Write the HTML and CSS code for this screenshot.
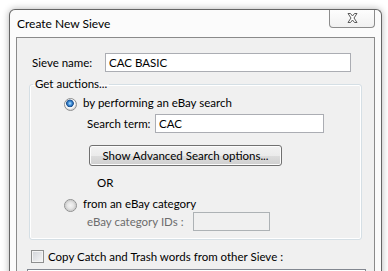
FILE: index.html
```html
<!DOCTYPE html>
<html lang="en">
<head>
    <meta charset="UTF-8">
    <title>Create New Sieve</title>
    <link rel="stylesheet" href="styles.css">
</head>
<body>
    <div class="window">
        <div class="titlebar">
            <span class="title">Create New Sieve</span>
            <button class="close" title="Close">
                <svg width="11" height="10" viewBox="0 0 11 10">
                    <path d="M1 .5h2.5L5.5 3 7.5.5H10L7 5l3 4.5H7.5L5.5 7 3.5 9.5H1L4 5z" fill="#fff" stroke="#5a5a5a" stroke-width="1" stroke-linejoin="round"/>
                </svg>
            </button>
        </div>
        <div class="client">
            <div class="name-row">
                <label class="name-label" for="sieve-name">Sieve name:</label>
                <input class="text name-input" id="sieve-name" type="text" value="CAC BASIC">
            </div>
            <fieldset class="group">
                <legend>Get auctions...</legend>
                <label class="option">
                    <input type="radio" name="source" checked>
                    <span>by performing an eBay search</span>
                </label>
                <div class="field-row search-row">
                    <span class="field-label">Search term:</span>
                    <input class="text search-input" type="text" value="CAC">
                </div>
                <button class="win-btn">Show Advanced Search options...</button>
                <div class="or">OR</div>
                <label class="option option-cat">
                    <input type="radio" name="source">
                    <span>from an eBay category</span>
                </label>
                <div class="field-row cat-row">
                    <span class="field-label disabled">eBay category IDs :</span>
                    <input class="text cat-input" type="text" disabled>
                </div>
            </fieldset>
            <label class="copy-row">
                <input type="checkbox">
                <span>Copy Catch and Trash words from other Sieve :</span>
            </label>
            <div class="list-box"></div>
        </div>
    </div>
</body>
</html>
```

FILE: styles.css
```css
html, body {
    margin: 0;
    height: 271px;
    overflow: hidden;
    background: #fff;
    font-family: 'Lato', 'Liberation Sans', sans-serif;
    font-size: 11.5px;
    color: #000;
}
.window {
    box-sizing: border-box;
    width: 373px;
    height: 300px;
    margin: 9px 0 0 9px;
    padding: 0 6px;
    border: 1px solid #666;
    border-bottom: none;
    border-radius: 6px 6px 0 0;
    background: #fbfbfb;
    box-shadow: 0 0 7px rgba(0, 0, 0, 0.3);
}
.titlebar {
    display: flex;
    justify-content: space-between;
    align-items: flex-start;
    height: 27px;
}
.title {
    padding: 6px 0 0 1px;
    font-size: 12px;
    line-height: 15px;
}
.close {
    box-sizing: border-box;
    display: flex;
    align-items: center;
    justify-content: center;
    width: 46px;
    height: 18px;
    padding: 0 0 1px;
    border: 1px solid #8c8c8c;
    border-top: none;
    border-radius: 0 0 4px 4px;
    background: linear-gradient(#fdfdfd, #f1f1f1);
}
.client {
    height: 260px;
    border: 1px solid #8a8a8a;
    background: #f0f0f0;
}
/* name row */
.name-row {
    display: flex;
    align-items: center;
    margin: 15px 0 0 15px;
}
.name-label {
    width: 73px;
}
.text {
    box-sizing: border-box;
    height: 19px;
    margin: 0;
    padding: 0 3px;
    border: 1px solid #abadb3;
    background: #fff;
    font: inherit;
    color: #000;
    outline: none;
}
.name-input {
    width: 246px;
}
/* group box */
.group {
    margin: 5px 12px 0;
    padding: 0 0 8px;
    border: 1px solid #d5dfe5;
    border-radius: 3px;
    box-shadow: inset 0 0 0 1px #fff;
}
.group legend {
    margin-left: 3px;
    padding: 0 2px;
    line-height: 14px;
}
.option {
    display: flex;
    align-items: flex-start;
    margin: 4px 0 0 34px;
    line-height: 15px;
}
.option input {
    appearance: none;
    width: 13px;
    height: 13px;
    margin: 3px 6px 0 0;
    border: 1px solid #8e8f8f;
    border-radius: 50%;
    background: radial-gradient(circle at 50% 50%, #f4f4f4 0, #e6e6e6 3px, #d0d0d0 5px, #fafafa 6px);
}
.option input:checked {
    background: radial-gradient(circle at 45% 40%, #b9e4ff 0, #3a8ad6 2px, #1b4f8e 3.5px, #fff 4.2px, #f4f4f4 5px, #d8d8d8 6px);
}
.option-cat {
    margin-top: 6px;
}
.field-row {
    display: flex;
    align-items: center;
    margin: 3px 0 0 57px;
}
.field-label {
    width: 68px;
}
.field-label.disabled {
    width: 106px;
    color: #6d6d6d;
}
.search-input {
    width: 169px;
}
.cat-row {
    margin-top: 0;
}
.cat-input {
    width: 77px;
    border-color: #adb2b5;
    background: #f0f0f0;
}
.win-btn {
    box-sizing: border-box;
    display: block;
    width: 193px;
    height: 21px;
    margin: 12px 0 0 59px;
    padding: 0;
    border: 1px solid #707070;
    border-radius: 3px;
    background: linear-gradient(#f2f2f2 0, #ebebeb 50%, #dddddd 50%, #cfcfcf 100%);
    box-shadow: inset 0 0 0 1px #fcfcfc;
    font: inherit;
    color: #000;
}
.or {
    margin: 9px 0 0 67px;
    line-height: 15px;
}
/* copy row */
.copy-row {
    display: flex;
    align-items: center;
    margin: 10px 0 0 14px;
}
.copy-row input {
    appearance: none;
    width: 13px;
    height: 13px;
    margin: 0 4px 0 0;
    border: 1px solid #8e8f8f;
    background: linear-gradient(135deg, #d0d3d8, #f7f7f7);
    box-shadow: inset 0 0 0 1px #f4f4f4;
}
.list-box {
    width: 337px;
    height: 40px;
    margin: 6px 0 0 10px;
    border: 1px solid #828790;
    background: #fff;
}
```
